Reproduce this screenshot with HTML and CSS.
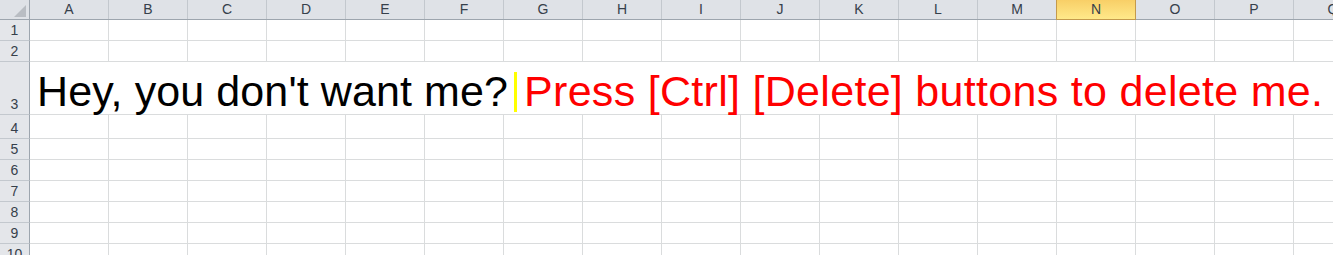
FILE: index.html
```html
<!DOCTYPE html>
<html lang="en">

<head>
  <meta charset="UTF-8">
  <title>Sheet1</title>
  <link rel="stylesheet" href="styles.css">
</head>

<body>
  <div class="sheet">
    <!-- column letters -->
    <div class="colhead">
      <div class="corner"><div class="tri"></div></div>
      <div class="col">A</div>
      <div class="col">B</div>
      <div class="col">C</div>
      <div class="col">D</div>
      <div class="col">E</div>
      <div class="col">F</div>
      <div class="col">G</div>
      <div class="col">H</div>
      <div class="col">I</div>
      <div class="col">J</div>
      <div class="col">K</div>
      <div class="col">L</div>
      <div class="col">M</div>
      <div class="col sel">N</div>
      <div class="col">O</div>
      <div class="col">P</div>
      <div class="col">Q</div>
    </div>

    <div class="row"><div class="rowhead">1</div><div class="cells"></div></div>
    <div class="row"><div class="rowhead">2</div><div class="cells"></div></div>
    <div class="row tall">
      <div class="rowhead">3</div>
      <div class="cells message">
        <span class="hey">Hey, you don't want me?</span><span class="caret"></span><span class="warn">Press [Ctrl] [Delete] buttons to delete me.</span>
      </div>
    </div>
    <div class="row r4"><div class="rowhead">4</div><div class="cells"></div></div>
    <div class="row"><div class="rowhead">5</div><div class="cells"></div></div>
    <div class="row"><div class="rowhead">6</div><div class="cells"></div></div>
    <div class="row"><div class="rowhead">7</div><div class="cells"></div></div>
    <div class="row"><div class="rowhead">8</div><div class="cells"></div></div>
    <div class="row"><div class="rowhead">9</div><div class="cells"></div></div>
    <div class="row"><div class="rowhead">10</div><div class="cells"></div></div>
  </div>
</body>

</html>
```

FILE: styles.css
```css
body {
  margin: 0;
  background: white;
  font-family: "Liberation Sans", Arial, sans-serif;
  overflow: hidden;
}

.sheet {
  width: 1373px;
}

.colhead {
  display: flex;
  height: 20px;
  box-sizing: border-box;
  border-bottom: 1px solid #9da5ae;
  background: #dfe2e7;
}

.corner {
  width: 30px;
  box-sizing: border-box;
  border-right: 1px solid #9da5ae;
  display: flex;
  justify-content: flex-end;
  align-items: flex-end;
  padding: 0 3px 2px 0;
}

.tri {
  width: 0;
  height: 0;
  border-left: 12px solid transparent;
  border-bottom: 12px solid #b9bdc3;
}

.col {
  width: 79px;
  box-sizing: border-box;
  border-right: 1px solid #c3c8ce;
  text-align: center;
  font-size: 14px;
  line-height: 19px;
  color: #36404b;
}

.col.sel {
  background: linear-gradient(#f8cf67, #ffe98a);
  border: 1px solid #c49a4c;
  border-top: 0;
  margin-left: -1px;
  width: 80px;
  margin-bottom: -1px;
  line-height: 19px;
}

.row {
  display: flex;
  height: 21px;
  box-sizing: border-box;
  border-bottom: 1px solid #dadcdd;
}

.row.tall {
  height: 53px;
}

.row.r4 {
  height: 24px;
}

.rowhead {
  width: 30px;
  flex: none;
  box-sizing: border-box;
  background: #e4e6ea;
  border-right: 1px solid #9da5ae;
  border-bottom: 1px solid #c3c8ce;
  margin-bottom: -1px;
  display: flex;
  align-items: flex-end;
  justify-content: center;
  font-size: 14px;
  line-height: 19px;
  color: #36404b;
}

.cells {
  flex: 1;
  background: repeating-linear-gradient(to right, transparent 0 78px, #dadcdd 78px 79px);
}

.cells.message {
  background: none;
  display: flex;
  align-items: flex-start;
  padding: 7px 0 0 7px;
  white-space: nowrap;
  font-family: "Liberation Sans", Tahoma, sans-serif;
  font-size: 43px;
  line-height: 44px;
}

.hey {
  color: black;
  letter-spacing: 0.1px;
}

.caret {
  flex: none;
  width: 3px;
  height: 40px;
  background: #ffff00;
  margin: 3px 7px 0 6px;
}

.warn {
  color: #ff0000;
  letter-spacing: 0.3px;
}
```
